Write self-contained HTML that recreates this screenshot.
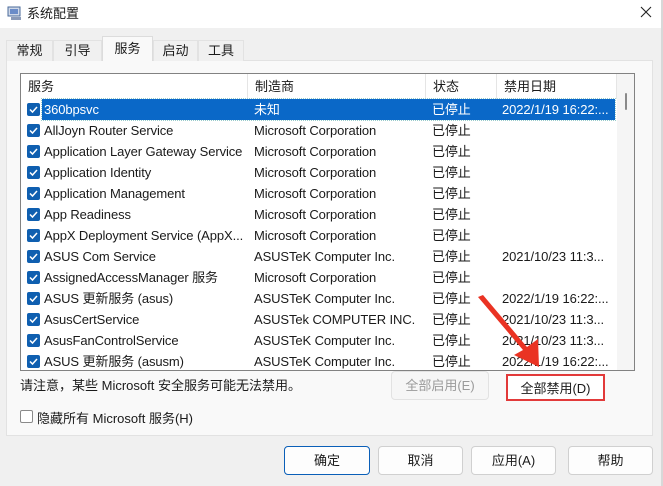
<!DOCTYPE html>
<html><head><meta charset="utf-8"><style>
*{margin:0;padding:0;box-sizing:border-box}
body{width:663px;height:486px;background:#f0f0f0;font-family:"Liberation Sans","Noto Sans CJK SC",sans-serif;font-size:13px;color:#1a1a1a;position:relative;overflow:hidden}
.abs{position:absolute}
.title{left:0;top:0;width:663px;height:28px;background:#fff}
.tab{top:40px;height:21px;background:#f0f0f0;border:1px solid #e2e2e2;border-bottom:none;text-align:center;line-height:19px;font-size:13px}
.tab.sel{top:36px;height:25px;background:#f9f9f9;line-height:23px}
.panel{left:6px;top:60px;width:647px;height:376px;background:#f9f9f9;border:1px solid #e2e2e2}
.list{left:20px;top:73px;width:615px;height:298px;background:#fff;border:1px solid #828282;overflow:hidden}
.hdr{position:absolute;top:0;height:25px;line-height:25px;border-right:1px solid #e5e5e5;padding-left:7px}
.row{position:absolute;left:0;width:596px;height:21px;line-height:21px;white-space:nowrap;letter-spacing:-0.1px}
.row span{position:absolute;top:0}
.cb{position:absolute;left:6px;top:4px;width:13px;height:13px;background:#0f5fb0;border-radius:2px}
.cb svg{position:absolute;left:1px;top:1px}
.sel-bg{position:absolute;left:21px;top:0;width:573px;height:21px;background:#0a68c8;outline:1px dotted #9cc;}
.btn{height:29px;background:#fdfdfd;border:1px solid #d0d0d0;border-radius:4px;text-align:center;line-height:27px}
</style></head><body>
<div class="abs title">
 <svg class="abs" style="left:7px;top:5px" width="16" height="16"><rect x="1" y="2" width="12" height="9" fill="#cfd8e8" stroke="#4a6a9a"/><rect x="3" y="4" width="8" height="5" fill="#6a8cc8"/><rect x="4" y="12" width="10" height="3" fill="#8a9ab8"/></svg>
 <div class="abs" style="left:27px;top:3px;font-size:13px">系统配置</div>
 <svg class="abs" style="left:640px;top:6px" width="12" height="12"><path d="M1 1L11 11M11 1L1 11" stroke="#222" stroke-width="1.1"/></svg>
</div>
<div class="abs panel"></div>
<div class="abs tab" style="left:6px;width:47px">常规</div>
<div class="abs tab" style="left:53px;width:49px">引导</div>
<div class="abs tab sel" style="left:102px;width:51px;border-color:#dcdcdc">服务</div>
<div class="abs tab" style="left:153px;width:45px">启动</div>
<div class="abs tab" style="left:198px;width:46px">工具</div>
<div class="abs list">
 <div class="hdr" style="left:0;width:227px">服务</div>
 <div class="hdr" style="left:227px;width:178px">制造商</div>
 <div class="hdr" style="left:405px;width:71px">状态</div>
 <div class="hdr" style="left:476px;width:120px">禁用日期</div>
 <div class="abs" style="left:596px;top:0;width:17px;height:298px;background:#f5f5f5"></div>
 <div class="abs" style="left:604px;top:19px;width:2px;height:17px;background:#8a8a8a;border-radius:1px"></div>
 <div id="rows"></div>
</div>
<div class="abs" style="left:20px;top:375px">请注意，某些 Microsoft 安全服务可能无法禁用。</div>
<div class="abs btn" style="left:391px;top:371px;width:98px;color:#9a9a9a;background:#f6f6f6;border-color:#e2e2e2">全部启用(E)</div>
<div class="abs btn" style="left:506px;top:374px;width:99px;height:27px;line-height:25px;border:2px solid #e23a3a;border-radius:0;background:#fff">全部禁用(D)</div>
<div class="abs" style="left:20px;top:410px;width:13px;height:13px;border:1px solid #8a8a8a;border-radius:2px;background:#fff"></div>
<div class="abs" style="left:37px;top:408px">隐藏所有 Microsoft 服务(H)</div>
<div class="abs btn" style="left:284px;top:446px;width:86px;border:1px solid #0a5fb8">确定</div>
<div class="abs btn" style="left:378px;top:446px;width:85px">取消</div>
<div class="abs btn" style="left:471px;top:446px;width:85px">应用(A)</div>
<div class="abs btn" style="left:568px;top:446px;width:85px">帮助</div>
<div class="abs" style="left:661px;top:0;width:2px;height:486px;background:#d8d8d8"></div>
<svg class="abs" style="left:0;top:0" width="663" height="486"><path d="M478 297L483 295L527 347L538 339L539 367L514 355L523 350Z" fill="#ea3323"/></svg>
<script>
var d=[["360bpsvc","未知","已停止","2022/1/19 16:22:..."],
["AllJoyn Router Service","Microsoft Corporation","已停止",""],
["Application Layer Gateway Service","Microsoft Corporation","已停止",""],
["Application Identity","Microsoft Corporation","已停止",""],
["Application Management","Microsoft Corporation","已停止",""],
["App Readiness","Microsoft Corporation","已停止",""],
["AppX Deployment Service (AppX...","Microsoft Corporation","已停止",""],
["ASUS Com Service","ASUSTeK Computer Inc.","已停止","2021/10/23 11:3..."],
["AssignedAccessManager 服务","Microsoft Corporation","已停止",""],
["ASUS 更新服务 (asus)","ASUSTeK Computer Inc.","已停止","2022/1/19 16:22:..."],
["AsusCertService","ASUSTek COMPUTER INC.","已停止","2021/10/23 11:3..."],
["AsusFanControlService","ASUSTeK Computer Inc.","已停止","2021/10/23 11:3..."],
["ASUS 更新服务 (asusm)","ASUSTeK Computer Inc.","已停止","2022/1/19 16:22:..."]];
var h="";
d.forEach(function(r,i){var s=i==0;var c=s?"color:#fff;":"";
h+='<div class="row" style="top:'+(25+i*21)+'px">'+(s?'<div class="sel-bg"></div>':'')+
'<div class="cb"><svg width="11" height="11"><path d="M2 5.5L4.5 8L9 3" stroke="#fff" stroke-width="1.5" fill="none"/></svg></div>'+
'<span style="left:23px;'+c+'">'+r[0]+'</span><span style="left:233px;'+c+'">'+r[1]+'</span><span style="left:411px;'+c+'">'+r[2]+'</span><span style="left:481px;'+c+'">'+r[3]+'</span></div>';});
document.getElementById("rows").innerHTML=h;
</script>
</body></html>
